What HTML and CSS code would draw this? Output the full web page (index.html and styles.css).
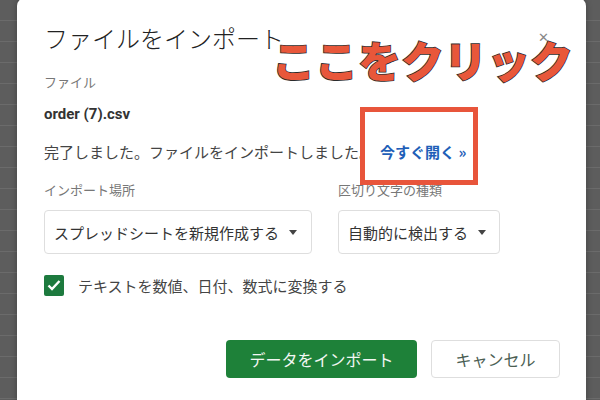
FILE: index.html
```html
<!DOCTYPE html>
<html lang="ja">
<head>
    <meta charset="UTF-8">
    <meta name="viewport" content="width=device-width, initial-scale=1.0">
    <title>ファイルをインポート</title>
    <link rel="stylesheet" href="styles.css">
</head>
<body>

<!-- Import dialog over the sheet -->
<div class="dialog">
    <div class="head">
        <h1 class="title">ファイルをインポート</h1>
        <span class="close">&#x2715;</span>
    </div>

    <div class="field-label">ファイル</div>
    <div class="filename">order (7).csv</div>
    <div class="message">完了しました。ファイルをインポートしました。<a class="open-link">今すぐ開く &raquo;</a></div>

    <div class="fields">
        <div class="field field-wide">
            <div class="field-label">インポート場所</div>
            <div class="select">スプレッドシートを新規作成する <span class="arrow"></span></div>
        </div>
        <div class="field field-narrow">
            <div class="field-label">区切り文字の種類</div>
            <div class="select">自動的に検出する <span class="arrow"></span></div>
        </div>
    </div>

    <label class="check-row">
        <span class="checkbox">
            <svg width="14" height="12" viewBox="0 0 14 12"><polyline points="1.5,6.5 5,10 12.5,2" fill="none" stroke="#fff" stroke-width="2.4"/></svg>
        </span>
        テキストを数値、日付、数式に変換する
    </label>

    <div class="actions">
        <button class="btn btn-primary">データをインポート</button>
        <button class="btn btn-cancel">キャンセル</button>
    </div>

    <!-- annotation overlay -->
    <div class="note">ここをクリック</div>
    <div class="note-box"></div>
</div>

</body>
</html>
```

FILE: styles.css
```css
body {
    margin: 0;
    padding: 0;
    height: 400px;
    overflow: hidden;
    background-color: #5d5d5d;
    background-image: repeating-linear-gradient(to bottom, transparent 0, transparent 20px, #6b6b6b 20px, #6b6b6b 21px);
    font-family: Roboto, "Noto Sans CJK JP", sans-serif;
}

.dialog {
    position: relative;
    background: #fff;
    margin: -2px 14px 0 17px;
    padding: 25px 26px 60px 27px;
    border-radius: 8px;
    box-shadow: 0 0 6px rgba(0, 0, 0, 0.3);
}

.head {
    display: flex;
    justify-content: space-between;
    align-items: center;
    height: 30px;
}

.title {
    margin: 0;
    font-family: "Noto Sans CJK JP", sans-serif;
    font-size: 24px;
    font-weight: 300;
    color: #222;
    line-height: 30px;
}

.close {
    margin-right: 11px;
    margin-top: -2px;
    font-size: 13px;
    color: #888;
}

.field-label {
    font-family: "Noto Sans CJK JP", sans-serif;
    font-size: 13px;
    line-height: 18px;
    color: #777;
}

.head + .field-label {
    margin-top: 20px;
}

.filename {
    margin-top: 13px;
    font-size: 15px;
    font-weight: 700;
    line-height: 20px;
    color: #333;
}

.message {
    margin-top: 18px;
    font-family: "Noto Sans CJK JP", sans-serif;
    font-size: 15px;
    line-height: 20px;
    color: #444;
}

.open-link {
    margin-left: 6px;
    color: #1f5fb8;
    font-weight: 700;
}

.fields {
    display: flex;
    gap: 26px;
    margin-top: 19px;
}

.field-wide {
    width: 268px;
}

.field-narrow {
    width: 162px;
}

.select {
    display: flex;
    align-items: center;
    margin-top: 11px;
    height: 42px;
    padding: 0 12px 0 9px;
    border: 1px solid #dedede;
    border-radius: 4px;
    font-family: "Noto Sans CJK JP", sans-serif;
    font-size: 15px;
    color: #333;
    white-space: nowrap;
}

.arrow {
    margin-left: 10px;
    border-left: 4px solid transparent;
    border-right: 4px solid transparent;
    border-top: 5px solid #444;
}

.check-row {
    display: flex;
    align-items: center;
    gap: 14px;
    margin-top: 19px;
    height: 24px;
    font-family: "Noto Sans CJK JP", sans-serif;
    font-size: 15px;
    color: #444;
}

.checkbox {
    display: flex;
    align-items: center;
    justify-content: center;
    width: 20px;
    height: 21px;
    border-radius: 2px;
    background: #1d7a3e;
}

.actions {
    display: flex;
    justify-content: flex-end;
    gap: 14px;
    margin-top: 43px;
}

.btn {
    height: 38px;
    border-radius: 4px;
    font-family: "Noto Sans CJK JP", sans-serif;
    font-size: 16px;
    cursor: pointer;
}

.btn-primary {
    width: 191px;
    border: none;
    background: #1e8139;
    color: #f2f7f3;
}

.btn-cancel {
    width: 129px;
    border: 1px solid #dedede;
    background: #fff;
    color: #4b5e53;
}

.note {
    position: absolute;
    left: 255px;
    top: 40px;
    font-family: "Noto Sans CJK JP", sans-serif;
    font-size: 43px;
    font-weight: 900;
    line-height: 1;
    color: #e8573a;
    -webkit-text-stroke: 1.6px #2b2b2b;
    paint-order: stroke fill;
    white-space: nowrap;
}

.note-box {
    position: absolute;
    left: 343px;
    top: 109px;
    width: 108px;
    height: 68px;
    border: 5px solid #e8553b;
}
```
